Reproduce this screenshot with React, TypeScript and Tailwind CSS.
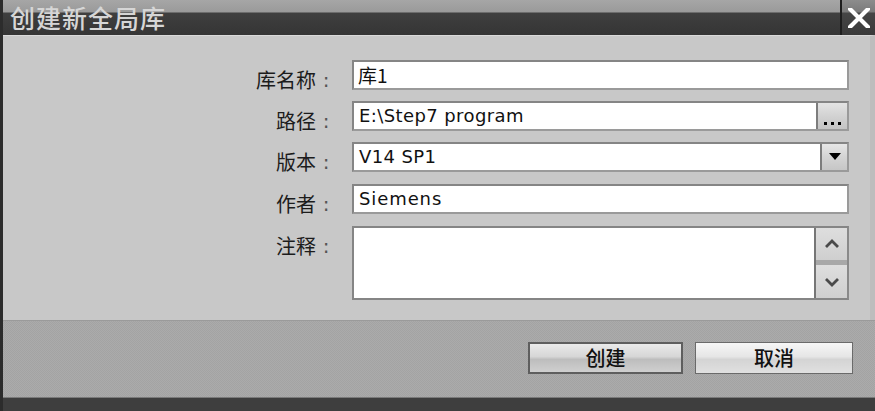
import React from "react";

const cjk = { fontFamily: '"Noto Sans CJK SC", "Noto Sans", sans-serif' };
const latin = { fontFamily: '"DejaVu Sans", "Noto Sans CJK SC", sans-serif' };

function Label({ text }: { text: string }) {
  return (
    <div
      className="w-[333px] shrink-0 flex justify-end text-[20px] leading-[30px] pt-[5px] text-[#1c1c1c]"
      style={cjk}
    >
      <span>{text}</span>
      <span className="w-[20px] text-center text-[#555]" style={latin}>:</span>
    </div>
  );
}

function Field({ children }: { children: React.ReactNode }) {
  return (
    <div className="ml-[16px] w-[497px] h-[30px] flex bg-white border-2 border-[#858585] border-r-[#9a9a9a] border-b-[#9a9a9a]">
      {children}
    </div>
  );
}

export default function App() {
  return (
    <div className="w-[875px] h-[411px] flex flex-col border-l-[3px] border-[#2c2c2c] overflow-hidden select-none">
      {/* title bar */}
      <div className="h-[35px] shrink-0 flex items-start bg-[linear-gradient(to_bottom,#a6a6a6_0px,#9a9a9a_12px,#3f3f3f_13px,#353535_35px)]">
        <div className="pl-[7px] pt-[2px] text-[25px] leading-[30px] font-medium text-[#d6d6d6] tracking-[1px] whitespace-nowrap" style={cjk}>
          创建新全局库
        </div>
        <div className="flex-1" />
        <div className="w-[35px] h-full border-l-2 border-[#1e1e1e] flex items-center justify-center bg-[linear-gradient(to_bottom,#8c8c8c_0px,#7a7a7a_12px,#454545_13px,#3a3a3a_35px)]">
          <svg width="22" height="20" viewBox="0 0 22 20">
            <path d="M2 1 L20 19 M20 1 L2 19" stroke="#ffffff" strokeWidth="4.2" strokeLinecap="square" />
          </svg>
        </div>
      </div>

      {/* body */}
      <div className="flex-1 bg-[#c8c8c8] pt-[24px] flex flex-col border-t border-[#dadada] border-r-[5px] border-r-[#bdbdbd]">
        {/* row 1 */}
        <div className="flex items-start h-[30px]">
          <Label text="库名称" />
          <Field>
            <div className="pl-[4px] text-[19px] leading-[26px] text-[#111]" style={cjk}>
              库1
            </div>
          </Field>
        </div>
        {/* row 2 */}
        <div className="flex items-start h-[30px] mt-[11px]">
          <Label text="路径" />
          <Field>
            <div className="flex-1 pl-[5px] text-[18px] leading-[26px] tracking-[0.4px] text-[#111]" style={latin}>
              E:\Step7 program
            </div>
            <div className="w-[31px] h-full border-l-2 border-[#7d7d7d] bg-[linear-gradient(to_bottom,#e4e4e4,#d2d2d2_50%,#c4c4c4)] flex items-end justify-center gap-[4px] pb-[4px]">
              <span className="w-[3px] h-[3px] bg-black" />
              <span className="w-[3px] h-[3px] bg-black" />
              <span className="w-[3px] h-[3px] bg-black" />
            </div>
          </Field>
        </div>
        {/* row 3 */}
        <div className="flex items-start h-[30px] mt-[11px]">
          <Label text="版本" />
          <Field>
            <div className="flex-1 pl-[5px] text-[18px] leading-[26px] tracking-[0.4px] text-[#111]" style={latin}>
              V14 SP1
            </div>
            <div className="w-[27px] h-full my-0 border-l-2 border-[#7d7d7d] bg-[linear-gradient(to_bottom,#e6e6e6,#d4d4d4_50%,#c6c6c6)] flex items-center justify-center">
              <svg width="12" height="8" viewBox="0 0 12 8">
                <path d="M0 0 L12 0 L6 7 Z" fill="#000" />
              </svg>
            </div>
          </Field>
        </div>
        {/* row 4 */}
        <div className="flex items-start h-[30px] mt-[12px]">
          <Label text="作者" />
          <Field>
            <div className="flex-1 pl-[5px] text-[18px] leading-[26px] text-[#111] tracking-[0.9px]" style={latin}>
              Siemens
            </div>
          </Field>
        </div>
        {/* row 5 */}
        <div className="flex items-start mt-[12px]">
          <Label text="注释" />
          <div className="ml-[16px] w-[497px] h-[74px] flex bg-white border-2 border-[#858585] border-r-[#8a8a8a]">
            <div className="flex-1" />
            <div className="w-[33px] h-full bg-[#a8a8a8] border-l-2 border-[#767676] flex flex-col justify-between">
              <div className="h-[32px] bg-[linear-gradient(to_bottom,#dedede,#cfcfcf)] flex items-center justify-center">
                <svg width="16" height="10" viewBox="0 0 16 10">
                  <path d="M2 8 L8 2 L14 8" stroke="#4a4a4a" strokeWidth="2.8" fill="none" />
                </svg>
              </div>
              <div className="h-[33px] bg-[linear-gradient(to_bottom,#dedede,#cfcfcf)] flex items-center justify-center">
                <svg width="16" height="10" viewBox="0 0 16 10">
                  <path d="M2 2 L8 8 L14 2" stroke="#4a4a4a" strokeWidth="2.8" fill="none" />
                </svg>
              </div>
            </div>
          </div>
        </div>
      </div>

      {/* footer */}
      <div className="h-[77px] shrink-0 bg-[#a9a9a9] bg-[repeating-conic-gradient(#ababab_0_25%,#a3a3a3_0_50%)] bg-[length:2px_2px] border-t border-[#9a9a9a] flex justify-end items-start pt-[21px] pr-[22px] gap-[12px]">
        <button
          className="w-[155px] h-[32px] border-2 border-[#5e5e5e] bg-[linear-gradient(to_bottom,#eaeaea,#d6d6d6_45%,#bdbdbd_55%,#cfcfcf)] text-[20px] leading-[26px] font-medium text-[#111]"
          style={cjk}
        >
          创建
        </button>
        <button
          className="w-[158px] h-[32px] border border-[#6a6a6a] bg-[linear-gradient(to_bottom,#f6f6f6,#e6e6e6_45%,#d4d4d4_55%,#e0e0e0)] text-[20px] leading-[28px] font-medium text-[#111]"
          style={cjk}
        >
          取消
        </button>
      </div>

      {/* bottom strip */}
      <div className="h-[14px] shrink-0 bg-[#3e3e3e] border-t border-[#7a7a7a]" />
    </div>
  );
}
